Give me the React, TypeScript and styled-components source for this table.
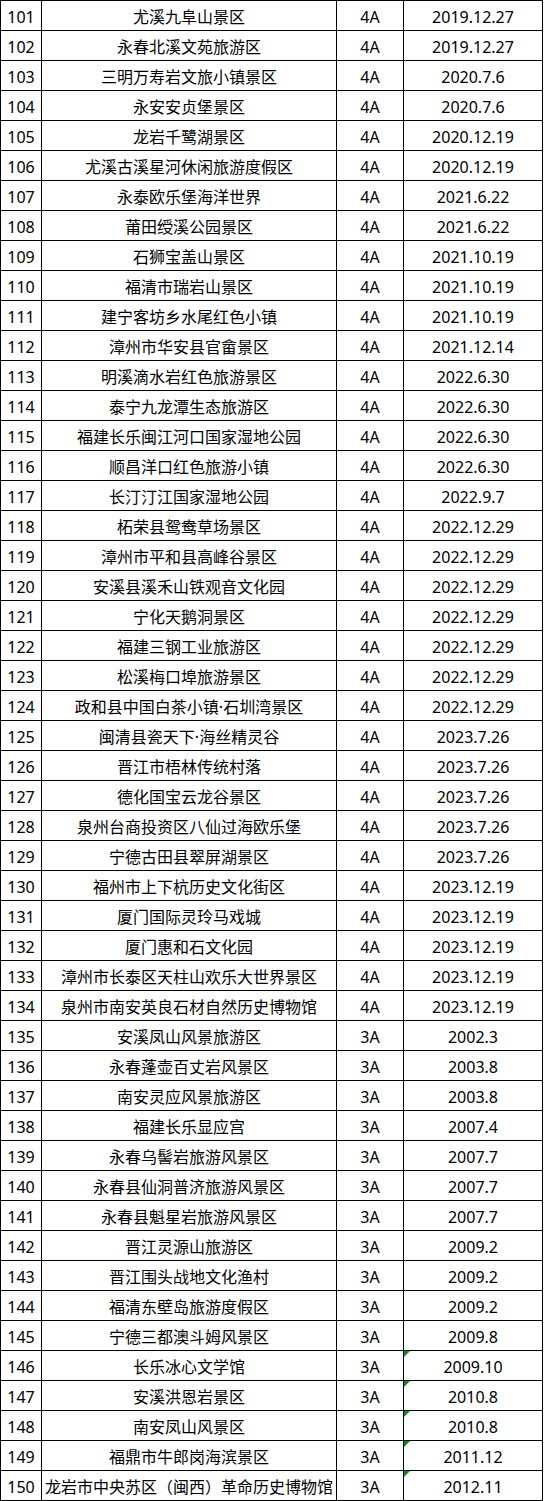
import React from "react";
import styled, { createGlobalStyle } from "styled-components";

const GlobalStyle = createGlobalStyle`
  html, body {
    margin: 0;
    padding: 0;
    background: #ffffff;
  }
  body {
    font-family: "Noto Sans", "Noto Sans CJK SC", sans-serif;
    color: #000000;
  }
`;

// track sizes include each cell's right/bottom border
const Sheet = styled.div`
  display: grid;
  grid-template-columns: 41px 295px 67px 139px;
  grid-auto-rows: 30px;
  width: max-content;
  border-top: 1px solid #000;
  border-left: 1px solid #000;
`;

const Cell = styled.div<{ $flag?: boolean }>`
  position: relative;
  display: flex;
  align-items: center;
  justify-content: center;
  box-sizing: border-box;
  padding-top: 2px;
  border-right: 1px solid #000;
  border-bottom: 1px solid #000;
  font-size: 16px;
  line-height: 1;
  white-space: nowrap;
  overflow: hidden;

  &::before {
    content: "";
    display: ${(p) => (p.$flag ? "block" : "none")};
    position: absolute;
    top: 0;
    left: 0;
    width: 0;
    height: 0;
    border-top: 6px solid #118a11;
    border-right: 6px solid transparent;
  }
`;

type Row = [string, string, string];

const rows: Row[] = [
  ["尤溪九阜山景区", "4A", "2019.12.27"],
  ["永春北溪文苑旅游区", "4A", "2019.12.27"],
  ["三明万寿岩文旅小镇景区", "4A", "2020.7.6"],
  ["永安安贞堡景区", "4A", "2020.7.6"],
  ["龙岩千鹭湖景区", "4A", "2020.12.19"],
  ["尤溪古溪星河休闲旅游度假区", "4A", "2020.12.19"],
  ["永泰欧乐堡海洋世界", "4A", "2021.6.22"],
  ["莆田绶溪公园景区", "4A", "2021.6.22"],
  ["石狮宝盖山景区", "4A", "2021.10.19"],
  ["福清市瑞岩山景区", "4A", "2021.10.19"],
  ["建宁客坊乡水尾红色小镇", "4A", "2021.10.19"],
  ["漳州市华安县官畲景区", "4A", "2021.12.14"],
  ["明溪滴水岩红色旅游景区", "4A", "2022.6.30"],
  ["泰宁九龙潭生态旅游区", "4A", "2022.6.30"],
  ["福建长乐闽江河口国家湿地公园", "4A", "2022.6.30"],
  ["顺昌洋口红色旅游小镇", "4A", "2022.6.30"],
  ["长汀汀江国家湿地公园", "4A", "2022.9.7"],
  ["柘荣县鸳鸯草场景区", "4A", "2022.12.29"],
  ["漳州市平和县高峰谷景区", "4A", "2022.12.29"],
  ["安溪县溪禾山铁观音文化园", "4A", "2022.12.29"],
  ["宁化天鹅洞景区", "4A", "2022.12.29"],
  ["福建三钢工业旅游区", "4A", "2022.12.29"],
  ["松溪梅口埠旅游景区", "4A", "2022.12.29"],
  ["政和县中国白茶小镇·石圳湾景区", "4A", "2022.12.29"],
  ["闽清县瓷天下·海丝精灵谷", "4A", "2023.7.26"],
  ["晋江市梧林传统村落", "4A", "2023.7.26"],
  ["德化国宝云龙谷景区", "4A", "2023.7.26"],
  ["泉州台商投资区八仙过海欧乐堡", "4A", "2023.7.26"],
  ["宁德古田县翠屏湖景区", "4A", "2023.7.26"],
  ["福州市上下杭历史文化街区", "4A", "2023.12.19"],
  ["厦门国际灵玲马戏城", "4A", "2023.12.19"],
  ["厦门惠和石文化园", "4A", "2023.12.19"],
  ["漳州市长泰区天柱山欢乐大世界景区", "4A", "2023.12.19"],
  ["泉州市南安英良石材自然历史博物馆", "4A", "2023.12.19"],
  ["安溪凤山风景旅游区", "3A", "2002.3"],
  ["永春蓬壶百丈岩风景区", "3A", "2003.8"],
  ["南安灵应风景旅游区", "3A", "2003.8"],
  ["福建长乐显应宫", "3A", "2007.4"],
  ["永春乌髻岩旅游风景区", "3A", "2007.7"],
  ["永春县仙洞普济旅游风景区", "3A", "2007.7"],
  ["永春县魁星岩旅游风景区", "3A", "2007.7"],
  ["晋江灵源山旅游区", "3A", "2009.2"],
  ["晋江围头战地文化渔村", "3A", "2009.2"],
  ["福清东壁岛旅游度假区", "3A", "2009.2"],
  ["宁德三都澳斗姆风景区", "3A", "2009.8"],
  ["长乐冰心文学馆", "3A", "2009.10"],
  ["安溪洪恩岩景区", "3A", "2010.8"],
  ["南安凤山风景区", "3A", "2010.8"],
  ["福鼎市牛郎岗海滨景区", "3A", "2011.12"],
  ["龙岩市中央苏区（闽西）革命历史博物馆", "3A", "2012.11"],
];

const FIRST = 101;
const FLAG_FROM = 146;

export default function App() {
  return (
    <>
      <GlobalStyle />
      <Sheet>
        {rows.map(([name, grade, date], i) => {
          const no = FIRST + i;
          return (
            <React.Fragment key={no}>
              <Cell>{no}</Cell>
              <Cell>{name}</Cell>
              <Cell>{grade}</Cell>
              <Cell $flag={no >= FLAG_FROM}>{date}</Cell>
            </React.Fragment>
          );
        })}
      </Sheet>
    </>
  );
}
